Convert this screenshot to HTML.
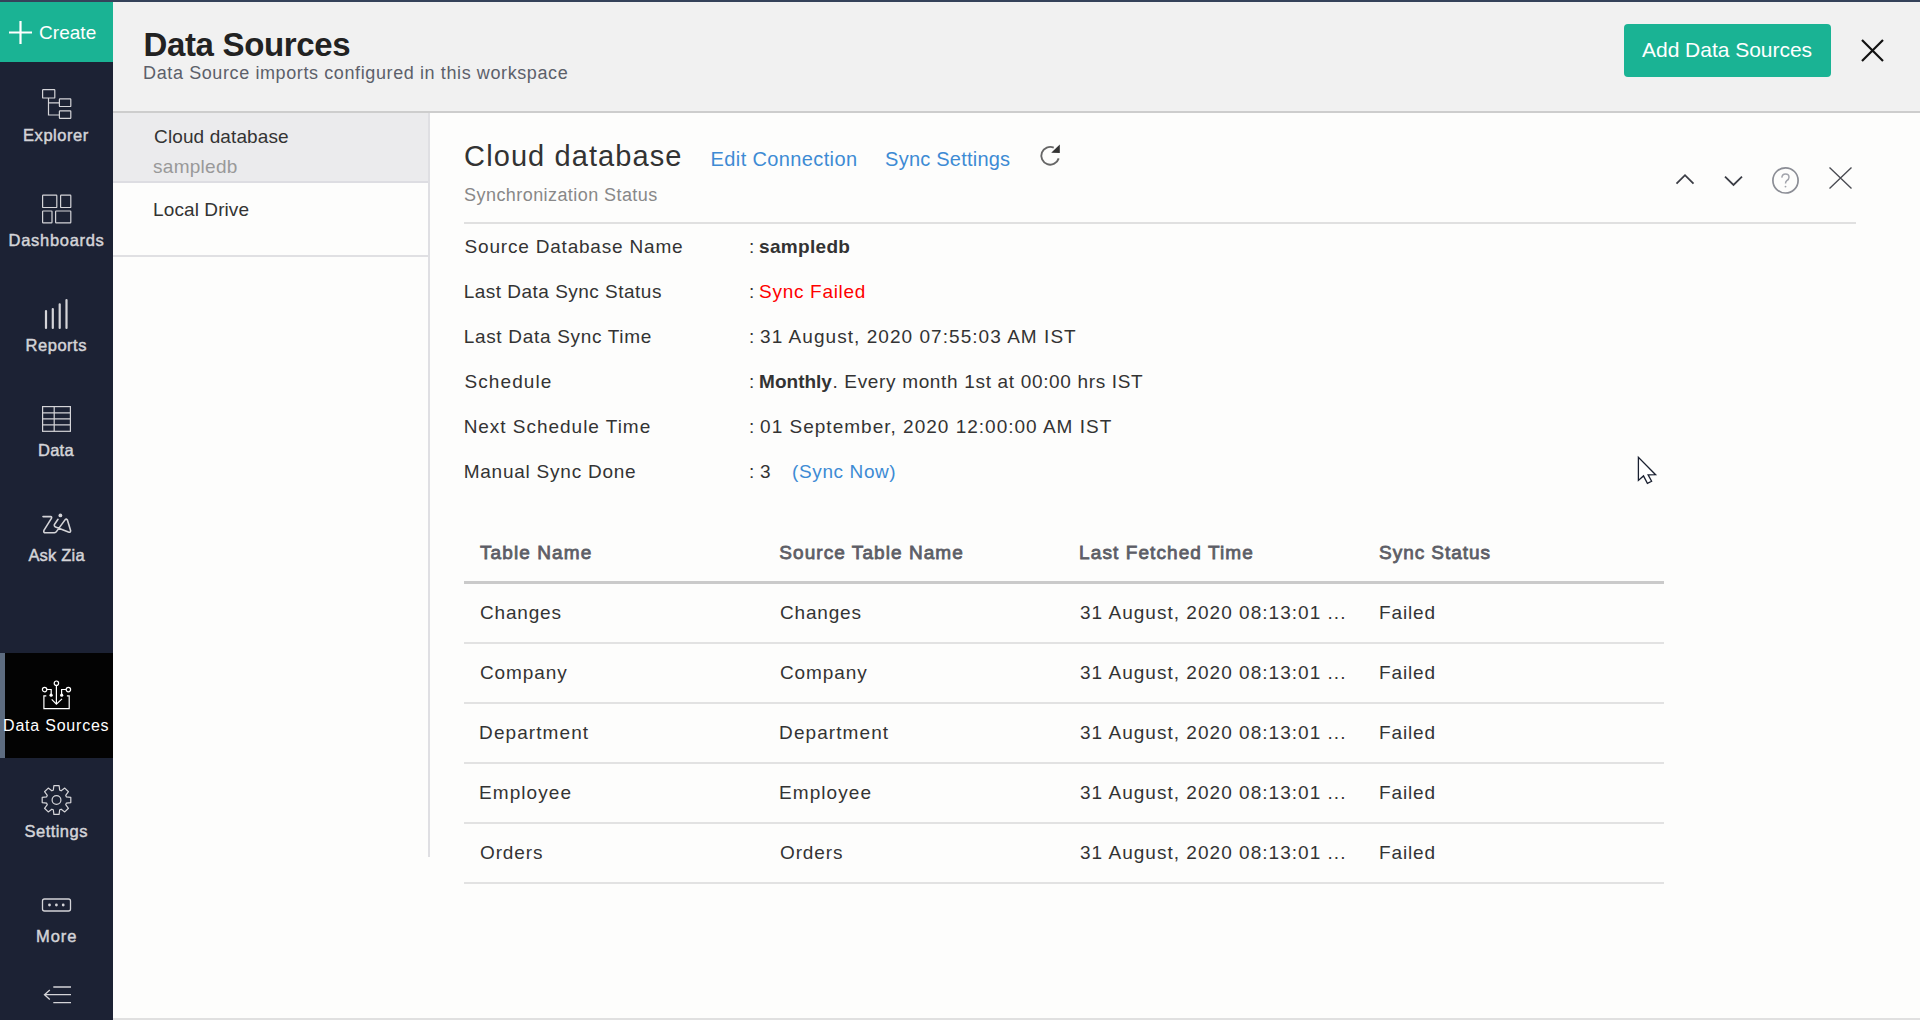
<!DOCTYPE html>
<html><head><meta charset="utf-8">
<style>
*{margin:0;padding:0;box-sizing:border-box}
html,body{width:1920px;height:1020px;overflow:hidden;background:#fdfdfc;font-family:"Liberation Sans",sans-serif;color:#333}
.a{position:absolute;white-space:nowrap}
svg{position:absolute;overflow:visible}
</style></head><body>
<div style="position:absolute;left:0;top:0;width:1920px;height:2px;background:#35425a"></div>
<div style="position:absolute;left:0;top:2px;width:113px;height:1018px;background:#1c2234"></div>
<div style="position:absolute;left:0;top:2px;width:113px;height:60px;background:#1ab394"></div>
<svg style="left:0;top:0" width="113" height="62"><path d="M20.5,21 V44 M9,32.5 H32" stroke="#fff" stroke-width="2.2" fill="none"/></svg>
<!-- Explorer -->
<svg style="left:0;top:0" width="113" height="160"><g fill="none" stroke="#d4d4d8" stroke-width="1.2">
<rect x="42.6" y="89.6" width="12.2" height="8.4" rx="0.6"/>
<rect x="59.4" y="98.9" width="11.4" height="7.6" rx="0.6"/>
<rect x="59.4" y="110.8" width="11.4" height="7.6" rx="0.6"/>
<path d="M48.5,98 V115 H59.4 M48.5,102.8 H59.4"/></g></svg>
<!-- Dashboards -->
<svg style="left:0;top:0" width="113" height="260"><g fill="none" stroke="#d4d4d8" stroke-width="1.2">
<rect x="42.6" y="195.1" width="14.2" height="12.4" rx="0.6"/>
<rect x="60.6" y="195.1" width="10.2" height="12.4" rx="0.6"/>
<rect x="42.6" y="211" width="9.4" height="11.8" rx="0.6"/>
<rect x="55.6" y="211" width="15.2" height="11.8" rx="0.6"/></g></svg>
<!-- Reports -->
<svg style="left:0;top:0" width="113" height="340"><g fill="none" stroke="#d4d4d8" stroke-width="2.2" stroke-linecap="round">
<path d="M46,311 V328 M52.8,309 V328 M59.7,304.3 V328 M66.5,300 V328"/></g></svg>
<!-- Data -->
<svg style="left:0;top:0" width="113" height="440"><g fill="none" stroke="#d4d4d8" stroke-width="1.2">
<rect x="42.6" y="406.6" width="27.8" height="24.7"/>
<path d="M54.2,406.6 V431.3 M42.6,412.8 H70.4 M42.6,418.9 H70.4 M42.6,424.9 H70.4"/></g></svg>
<!-- Ask Zia -->
<svg style="left:38px;top:508px" width="40" height="32"><g fill="none" stroke="#d4d4d8" stroke-width="1.6" stroke-linejoin="round" stroke-linecap="round">
<path d="M5,8.6 H12.6 Q14.2,8.8 13.4,10.4 L5.9,22.4 Q5.2,24.8 7.6,24.8 H16.4 Q17.8,24.6 18.6,23.4 L27.2,11.6 Q28.4,10.4 29.4,12 L32.6,22.6 Q32.8,24.8 30.4,24.1 L17.6,19 Q15.6,17.8 16.6,16.2 L20,11.3"/></g>
<circle cx="22.4" cy="7.4" r="1.9" fill="#d4d4d8"/></svg>
<!-- Data Sources active -->
<div style="position:absolute;left:0;top:653px;width:113px;height:105px;background:#030303"></div>
<div style="position:absolute;left:0;top:653px;width:5px;height:105px;background:#5d6c80"></div>
<svg style="left:36px;top:675px" width="40" height="40"><g fill="none" stroke="#fff" stroke-width="1.2">
<path d="M10.3,20.8 H7.9 V33.6 H33.2 V20.8 H30.9"/>
<path d="M20.4,10.4 V29 M15.7,24.3 L20.4,29.1 L26,23.9"/>
<circle cx="20.4" cy="8.2" r="2.2"/>
<circle cx="8.6" cy="14.6" r="2.2"/>
<circle cx="32.4" cy="14.6" r="2.2"/>
<path d="M10.8,14.5 H15.2 V20 M30.2,14.5 H25.6 V20"/></g>
<circle cx="15.1" cy="20.2" r="1.6" fill="#fff"/><circle cx="25.7" cy="20.2" r="1.6" fill="#fff"/></svg>
<!-- Settings -->
<svg style="left:0;top:0" width="113" height="1020"><g transform="translate(56.5,800)" fill="none" stroke="#d4d4d8" stroke-width="1.2" stroke-linejoin="round">
<path d="M-3.20,-9.80 L-2.60,-14.30 L2.60,-14.30 L3.20,-9.80 A9.8,9.8 0 0 1 4.67,-9.19 L8.27,-11.95 L11.95,-8.27 L9.19,-4.67 A9.8,9.8 0 0 1 9.80,-3.20 L14.30,-2.60 L14.30,2.60 L9.80,3.20 A9.8,9.8 0 0 1 9.19,4.67 L11.95,8.27 L8.27,11.95 L4.67,9.19 A9.8,9.8 0 0 1 3.20,9.80 L2.60,14.30 L-2.60,14.30 L-3.20,9.80 A9.8,9.8 0 0 1 -4.67,9.19 L-8.27,11.95 L-11.95,8.27 L-9.19,4.67 A9.8,9.8 0 0 1 -9.80,3.20 L-14.30,2.60 L-14.30,-2.60 L-9.80,-3.20 A9.8,9.8 0 0 1 -9.19,-4.67 L-11.95,-8.27 L-8.27,-11.95 L-4.67,-9.19 A9.8,9.8 0 0 1 -3.20,-9.80Z"/>
<circle cx="0" cy="0" r="4.4"/></g></svg>
<!-- More + collapse -->
<svg style="left:0;top:0" width="113" height="1020"><g fill="none" stroke="#d4d4d8" stroke-width="1.3">
<rect x="42.5" y="899" width="28" height="12" rx="2"/>
<path d="M53.3,987 H71 M44.5,994.7 H71 M53.3,1002.7 H71 M49.8,989.9 L44.5,994.7 L49.8,999.5"/></g>
<g fill="#d4d4d8"><circle cx="49.5" cy="905" r="1.4"/><circle cx="56.4" cy="905" r="1.4"/><circle cx="63.2" cy="905" r="1.4"/></g></svg>

<!-- Header -->
<div style="position:absolute;left:113px;top:2px;width:1807px;height:111px;background:#f1f1f1;border-bottom:2px solid #cdcdcd"></div>
<div style="position:absolute;left:1624px;top:24px;width:207px;height:53px;background:#1ab394;border-radius:4px"></div>
<svg style="left:1861px;top:39px" width="23" height="23"><path d="M1,1 L22,22 M22,1 L1,22" stroke="#111" stroke-width="2.2"/></svg>

<!-- left list -->
<div style="position:absolute;left:113px;top:113px;width:315px;height:70px;background:#ebebed;border-bottom:2px solid #dddde2"></div>
<div style="position:absolute;left:113px;top:255px;width:315px;height:2px;background:#e0e0e3"></div>
<div style="position:absolute;left:428px;top:113px;width:2px;height:744px;background:#dfdfe3"></div>

<!-- detail icons -->
<svg style="left:1030px;top:135px" width="40" height="40"><path d="M23.75,12.6 A8.9,8.9 0 1 0 28.7,23.4" fill="none" stroke="#666" stroke-width="1.9"/><path d="M21.2,17.8 L29.8,9.6 L29.8,18 Z" fill="#333"/></svg>
<div style="position:absolute;left:464px;top:222px;width:1392px;height:2px;background:#e0e0e0"></div>
<svg style="left:1640px;top:140px" width="240" height="90"><g fill="none" stroke-width="2">
<path d="M36.5,43.6 L45,35.2 L53.5,43.6" stroke="#3b3d45" stroke-width="1.8"/>
<path d="M85,36.6 L93.5,45 L102,36.6" stroke="#3b3d45" stroke-width="1.8"/>
<circle cx="145.5" cy="40.4" r="12.6" stroke="#8b8d95" stroke-width="1.7"/>
<path d="M189.5,27.5 L211.5,48.5 M211.5,27.5 L189.5,48.5" stroke="#4a4b52" stroke-width="1.35"/></g>
<path d="M141.8,37.6 Q142.2,34 145.5,34 Q149,34 149,37.2 Q149,39.3 146.8,40.6 Q145.5,41.5 145.5,43.6" fill="none" stroke="#a2a4ac" stroke-width="1.5"/><circle cx="145.5" cy="46.6" r="0.95" fill="#a2a4ac"/></svg>

<div style="position:absolute;left:113px;top:1018px;width:1807px;height:2px;background:#e0e0e0"></div>
<!-- cursor -->
<svg style="left:1637px;top:456px" width="20" height="30"><path d="M1.4,1.4 V24.4 L6.5,19.9 L10.4,27.3 L14.6,25.3 L11.1,18.9 L18.6,18.7 Z" fill="#fff" stroke="#1a2030" stroke-width="1.3" stroke-linejoin="miter"/></svg>

<div style="position:absolute;left:464px;top:581px;width:1200px;height:3px;background:#cacaca"></div>
<div style="position:absolute;left:464px;top:642px;width:1200px;height:2px;background:#e2e2e2"></div>
<div style="position:absolute;left:464px;top:702px;width:1200px;height:2px;background:#e2e2e2"></div>
<div style="position:absolute;left:464px;top:762px;width:1200px;height:2px;background:#e2e2e2"></div>
<div style="position:absolute;left:464px;top:822px;width:1200px;height:2px;background:#e2e2e2"></div>
<div style="position:absolute;left:464px;top:882px;width:1200px;height:2px;background:#e2e2e2"></div>
<div id="create" class="a" style="left:39.02px;top:23.12px;font-size:19px;line-height:19px;color:#fff;letter-spacing:0.036px;">Create</div>
<div id="explorer" class="a" style="left:23.10px;top:127.43px;font-size:16.5px;line-height:16.5px;-webkit-text-stroke:0.46px #d4d4d8;color:#d4d4d8;letter-spacing:0.514px;">Explorer</div>
<div id="dash" class="a" style="left:8.60px;top:232.43px;font-size:16.5px;line-height:16.5px;-webkit-text-stroke:0.46px #d4d4d8;color:#d4d4d8;letter-spacing:0.700px;">Dashboards</div>
<div id="reports" class="a" style="left:25.62px;top:337.03px;font-size:16.5px;line-height:16.5px;-webkit-text-stroke:0.46px #d4d4d8;color:#d4d4d8;letter-spacing:0.510px;">Reports</div>
<div id="data" class="a" style="left:38.04px;top:442.03px;font-size:16.5px;line-height:16.5px;-webkit-text-stroke:0.46px #d4d4d8;color:#d4d4d8;letter-spacing:0.240px;">Data</div>
<div id="askzia" class="a" style="left:28.40px;top:547.03px;font-size:16.5px;line-height:16.5px;-webkit-text-stroke:0.46px #d4d4d8;color:#d4d4d8;letter-spacing:0.210px;">Ask Zia</div>
<div id="dsrc" class="a" style="left:3.10px;top:717.96px;font-size:16px;line-height:16px;color:#fff;letter-spacing:0.780px;">Data Sources</div>
<div id="settings" class="a" style="left:24.54px;top:822.93px;font-size:16.5px;line-height:16.5px;-webkit-text-stroke:0.46px #d4d4d8;color:#d4d4d8;letter-spacing:0.463px;">Settings</div>
<div id="more" class="a" style="left:36.04px;top:927.93px;font-size:16.5px;line-height:16.5px;-webkit-text-stroke:0.46px #d4d4d8;color:#d4d4d8;letter-spacing:0.960px;">More</div>
<div id="title" class="a" style="left:143.40px;top:27.67px;font-size:33px;line-height:33px;font-weight:bold;color:#222;letter-spacing:-0.327px;">Data Sources</div>
<div id="subtitle" class="a" style="left:143.10px;top:63.96px;font-size:18px;line-height:18px;color:#5c606a;letter-spacing:0.605px;">Data Source imports configured in this workspace</div>
<div id="addbtn" class="a" style="left:1642.02px;top:38.82px;font-size:21px;line-height:21px;color:#fff;letter-spacing:-0.024px;">Add Data Sources</div>
<div id="lcloud" class="a" style="left:154.06px;top:126.92px;font-size:19px;line-height:19px;color:#333;letter-spacing:0.111px;">Cloud database</div>
<div id="lsample" class="a" style="left:153.10px;top:156.52px;font-size:19px;line-height:19px;color:#999;letter-spacing:0.257px;">sampledb</div>
<div id="llocal" class="a" style="left:153.10px;top:199.92px;font-size:19px;line-height:19px;color:#333;letter-spacing:0.090px;">Local Drive</div>
<div id="heading" class="a" style="left:464.10px;top:141.95px;font-size:29px;line-height:29px;color:#333;letter-spacing:1.094px;">Cloud database</div>
<div id="edit" class="a" style="left:710.62px;top:148.87px;font-size:20px;line-height:20px;color:#3d8bd4;letter-spacing:0.373px;">Edit Connection</div>
<div id="syncset" class="a" style="left:885.10px;top:148.87px;font-size:20px;line-height:20px;color:#3d8bd4;letter-spacing:0.225px;">Sync Settings</div>
<div id="synstat" class="a" style="left:464.10px;top:186.46px;font-size:18px;line-height:18px;color:#888;letter-spacing:0.429px;">Synchronization Status</div>
<div id="lab0" class="a" style="left:464.54px;top:236.72px;font-size:19px;line-height:19px;color:#333;letter-spacing:0.805px;">Source Database Name</div>
<div id="colon0" class="a" style="left:749.10px;top:236.72px;font-size:19px;line-height:19px;color:#333;letter-spacing:0.000px;">:</div>
<div id="lab1" class="a" style="left:463.64px;top:281.72px;font-size:19px;line-height:19px;color:#333;letter-spacing:0.491px;">Last Data Sync Status</div>
<div id="colon1" class="a" style="left:749.10px;top:281.72px;font-size:19px;line-height:19px;color:#333;letter-spacing:0.000px;">:</div>
<div id="lab2" class="a" style="left:463.64px;top:326.72px;font-size:19px;line-height:19px;color:#333;letter-spacing:0.690px;">Last Data Sync Time</div>
<div id="colon2" class="a" style="left:749.10px;top:326.72px;font-size:19px;line-height:19px;color:#333;letter-spacing:0.000px;">:</div>
<div id="lab3" class="a" style="left:464.54px;top:371.72px;font-size:19px;line-height:19px;color:#333;letter-spacing:1.080px;">Schedule</div>
<div id="colon3" class="a" style="left:749.10px;top:371.72px;font-size:19px;line-height:19px;color:#333;letter-spacing:0.000px;">:</div>
<div id="lab4" class="a" style="left:463.64px;top:416.72px;font-size:19px;line-height:19px;color:#333;letter-spacing:0.974px;">Next Schedule Time</div>
<div id="colon4" class="a" style="left:749.10px;top:416.72px;font-size:19px;line-height:19px;color:#333;letter-spacing:0.000px;">:</div>
<div id="lab5" class="a" style="left:463.64px;top:461.72px;font-size:19px;line-height:19px;color:#333;letter-spacing:0.768px;">Manual Sync Done</div>
<div id="colon5" class="a" style="left:749.10px;top:461.72px;font-size:19px;line-height:19px;color:#333;letter-spacing:0.000px;">:</div>
<div id="v0" class="a" style="left:759.06px;top:236.72px;font-size:19px;line-height:19px;font-weight:bold;color:#333;letter-spacing:0.309px;">sampledb</div>
<div id="v1" class="a" style="left:759.10px;top:281.72px;font-size:19px;line-height:19px;color:#f00;letter-spacing:0.702px;">Sync Failed</div>
<div id="v2" class="a" style="left:760.08px;top:326.72px;font-size:19px;line-height:19px;color:#333;letter-spacing:1.050px;">31 August, 2020 07:55:03 AM IST</div>
<div id="v3a" class="a" style="left:759.10px;top:371.72px;font-size:19px;line-height:19px;font-weight:bold;color:#333;letter-spacing:0.000px;">Monthly</div>
<div id="v3b" class="a" style="left:832.40px;top:371.72px;font-size:19px;line-height:19px;color:#333;letter-spacing:0.668px;">. Every month 1st at 00:00 hrs IST</div>
<div id="v4" class="a" style="left:760.08px;top:416.72px;font-size:19px;line-height:19px;color:#333;letter-spacing:1.009px;">01 September, 2020 12:00:00 AM IST</div>
<div id="v5" class="a" style="left:760.08px;top:461.72px;font-size:19px;line-height:19px;color:#333;letter-spacing:0.000px;">3</div>
<div id="v5b" class="a" style="left:792.12px;top:461.72px;font-size:19px;line-height:19px;color:#3d8bd4;letter-spacing:0.600px;">(Sync Now)</div>
<div id="th0" class="a" style="left:480.00px;top:542.92px;font-size:19px;line-height:19px;-webkit-text-stroke:0.80px #5d5e66;color:#5d5e66;letter-spacing:1.100px;">Table Name</div>
<div id="th1" class="a" style="left:779.30px;top:542.92px;font-size:19px;line-height:19px;-webkit-text-stroke:0.80px #5d5e66;color:#5d5e66;letter-spacing:1.063px;">Source Table Name</div>
<div id="th2" class="a" style="left:1079.10px;top:542.92px;font-size:19px;line-height:19px;-webkit-text-stroke:0.80px #5d5e66;color:#5d5e66;letter-spacing:1.091px;">Last Fetched Time</div>
<div id="th3" class="a" style="left:1379.06px;top:542.92px;font-size:19px;line-height:19px;-webkit-text-stroke:0.80px #5d5e66;color:#5d5e66;letter-spacing:0.954px;">Sync Status</div>
<div id="n0" class="a" style="left:480.00px;top:602.67px;font-size:19px;line-height:19px;color:#333;letter-spacing:0.810px;">Changes</div>
<div id="s0" class="a" style="left:780.00px;top:602.67px;font-size:19px;line-height:19px;color:#333;letter-spacing:0.810px;">Changes</div>
<div id="d0" class="a" style="left:1080.00px;top:602.67px;font-size:19px;line-height:19px;color:#333;letter-spacing:1.027px;">31 August, 2020 08:13:01 ...</div>
<div id="f0" class="a" style="left:1379.10px;top:602.67px;font-size:19px;line-height:19px;color:#333;letter-spacing:0.828px;">Failed</div>
<div id="n1" class="a" style="left:480.00px;top:662.67px;font-size:19px;line-height:19px;color:#333;letter-spacing:0.900px;">Company</div>
<div id="s1" class="a" style="left:780.00px;top:662.67px;font-size:19px;line-height:19px;color:#333;letter-spacing:0.900px;">Company</div>
<div id="d1" class="a" style="left:1080.00px;top:662.67px;font-size:19px;line-height:19px;color:#333;letter-spacing:1.027px;">31 August, 2020 08:13:01 ...</div>
<div id="f1" class="a" style="left:1379.10px;top:662.67px;font-size:19px;line-height:19px;color:#333;letter-spacing:0.828px;">Failed</div>
<div id="n2" class="a" style="left:479.10px;top:722.67px;font-size:19px;line-height:19px;color:#333;letter-spacing:1.080px;">Department</div>
<div id="s2" class="a" style="left:779.10px;top:722.67px;font-size:19px;line-height:19px;color:#333;letter-spacing:1.080px;">Department</div>
<div id="d2" class="a" style="left:1080.00px;top:722.67px;font-size:19px;line-height:19px;color:#333;letter-spacing:1.027px;">31 August, 2020 08:13:01 ...</div>
<div id="f2" class="a" style="left:1379.10px;top:722.67px;font-size:19px;line-height:19px;color:#333;letter-spacing:0.828px;">Failed</div>
<div id="n3" class="a" style="left:479.10px;top:782.67px;font-size:19px;line-height:19px;color:#333;letter-spacing:1.054px;">Employee</div>
<div id="s3" class="a" style="left:779.10px;top:782.67px;font-size:19px;line-height:19px;color:#333;letter-spacing:1.054px;">Employee</div>
<div id="d3" class="a" style="left:1080.00px;top:782.67px;font-size:19px;line-height:19px;color:#333;letter-spacing:1.027px;">31 August, 2020 08:13:01 ...</div>
<div id="f3" class="a" style="left:1379.10px;top:782.67px;font-size:19px;line-height:19px;color:#333;letter-spacing:0.828px;">Failed</div>
<div id="n4" class="a" style="left:480.00px;top:842.67px;font-size:19px;line-height:19px;color:#333;letter-spacing:0.864px;">Orders</div>
<div id="s4" class="a" style="left:780.00px;top:842.67px;font-size:19px;line-height:19px;color:#333;letter-spacing:0.864px;">Orders</div>
<div id="d4" class="a" style="left:1080.00px;top:842.67px;font-size:19px;line-height:19px;color:#333;letter-spacing:1.027px;">31 August, 2020 08:13:01 ...</div>
<div id="f4" class="a" style="left:1379.10px;top:842.67px;font-size:19px;line-height:19px;color:#333;letter-spacing:0.828px;">Failed</div>
</body></html>
